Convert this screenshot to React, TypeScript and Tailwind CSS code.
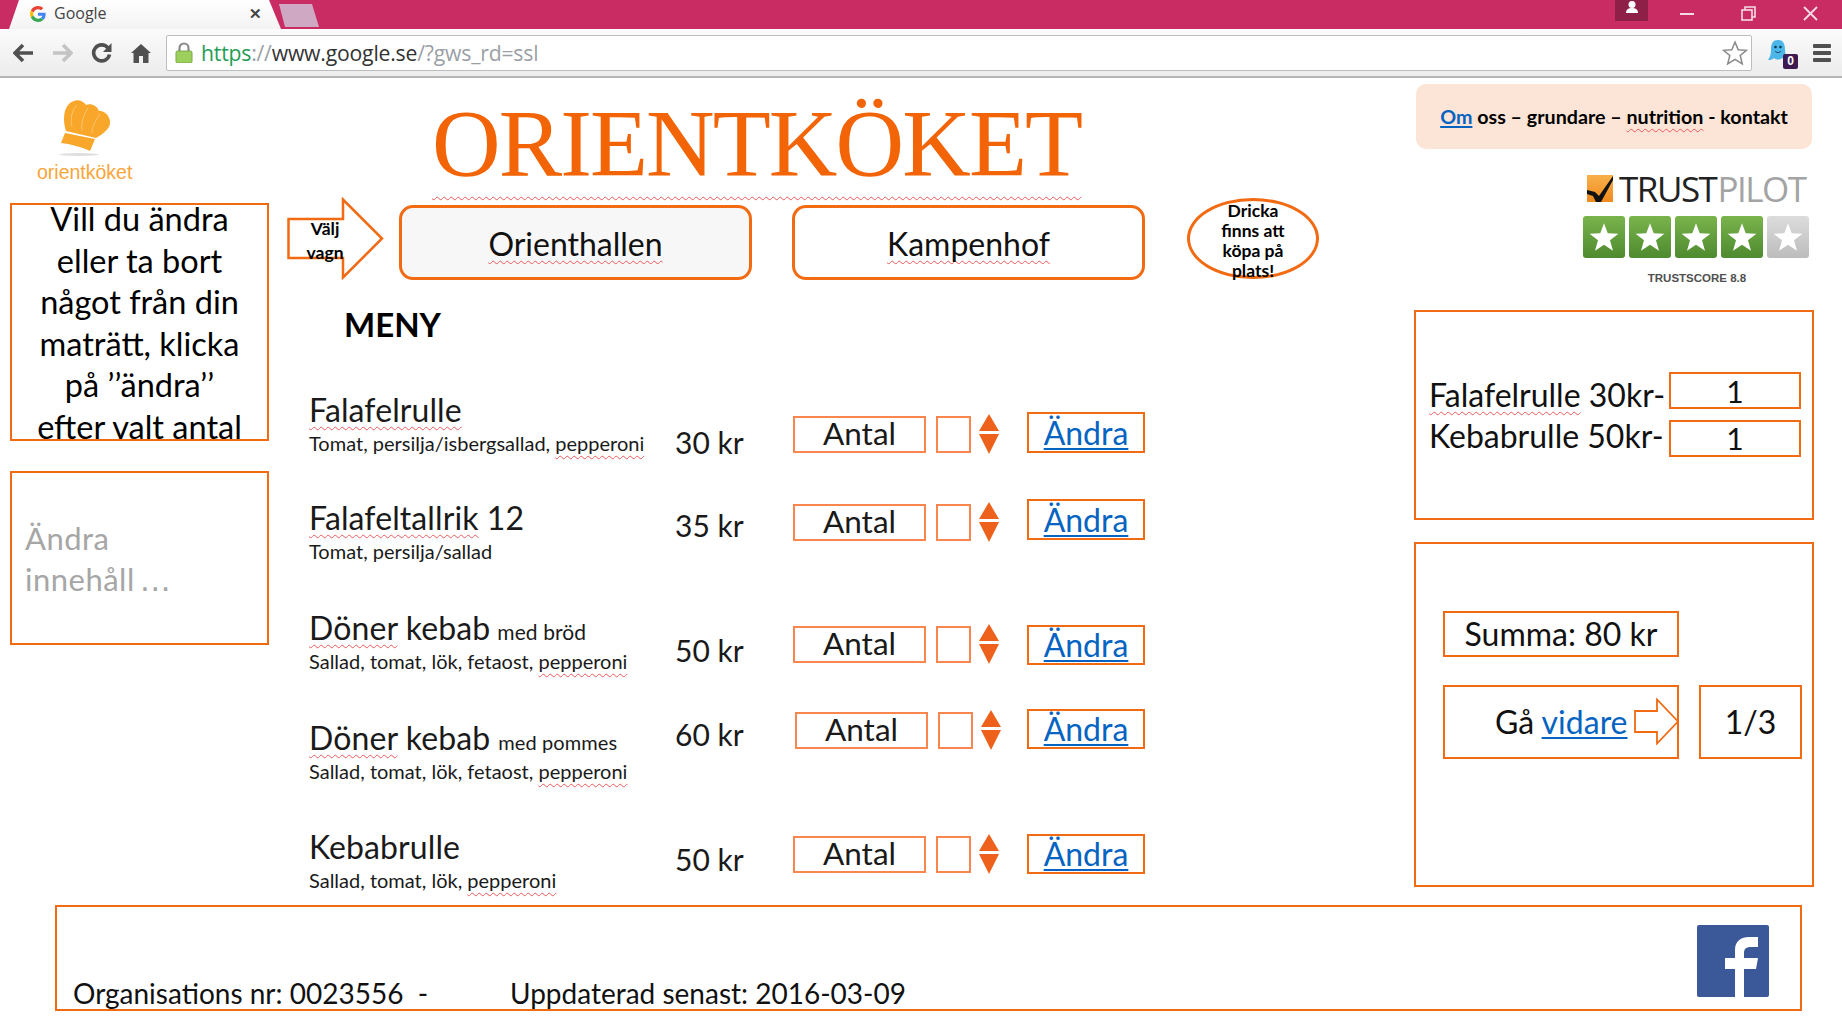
import React from "react";

const ORANGE = "border-[#f26a12]";
const SQ = "underline decoration-wavy decoration-[#ee5a5a] decoration-1 underline-offset-[4px] [text-decoration-skip-ink:none]";
const LINK = "text-[#0563c1] underline decoration-2 underline-offset-[3px]";

function Star({ size = 30, color = "#fff" }: { size?: number; color?: string }) {
  return (
    <svg width={size} height={size} viewBox="0 0 24 24">
      <polygon fill={color} points="12,1 15,9 23.5,9.3 16.8,14.6 19.2,23 12,18.2 4.8,23 7.2,14.6 0.5,9.3 9,9" />
    </svg>
  );
}

function Updown() {
  return (
    <svg width="20" height="40" viewBox="0 0 20 40">
      <polygon fill="#ee611c" points="10,0 20,17 0,17" />
      <polygon fill="#ee611c" points="0,20 20,20 10,40" />
    </svg>
  );
}

function Chrome() {
  return (
    <div className="h-[78px] flex flex-col">
      <div className="h-[29px] bg-[#c92c62] flex items-start shrink-0">
        <div className="ml-[9px] w-[272px] h-[29px] bg-linear-to-b from-white to-[#f3f3f3] [clip-path:polygon(10px_0,260px_0,272px_100%,0_100%)] flex items-center shrink-0">
          <svg className="ml-[21px] -mt-[2px]" width="16" height="16" viewBox="0 0 48 48">
            <path fill="#EA4335" d="M24 9.5c3.5 0 6.7 1.2 9.2 3.6l6.9-6.9C35.9 2.4 30.5 0 24 0 14.6 0 6.5 5.4 2.6 13.2l8 6.2C12.4 13.7 17.700 9.500 24 9.500z" />
            <path fill="#4285F4" d="M47 24.500c0-1.600-.100-3.100-.400-4.500H24v9h12.900c-.600 3-2.200 5.500-4.700 7.200l7.700 6C44.400 38 47 31.800 47 24.500z" />
            <path fill="#FBBC05" d="M10.500 28.600C10 27.200 9.800 25.600 9.800 24s.200-3.200.700-4.600l-8-6.200C.9 16.400 0 20.100 0 24s.900 7.600 2.600 10.800l7.900-6.200z" />
            <path fill="#34A853" d="M24 48c6.500 0 11.900-2.100 15.900-5.800l-7.700-6c-2.200 1.500-5 2.300-8.200 2.300-6.300 0-11.600-4.200-13.500-9.900l-7.900 6.200C6.500 42.600 14.600 48 24 48z" />
          </svg>
          <span className="ml-[8px] -mt-[3px] text-[16px] text-[#444] font-['Open_Sans',sans-serif]">Google</span>
          <span className="ml-[142px] -mt-[1px] text-[15px] font-bold text-[#444] font-['Liberation_Sans',sans-serif]">✕</span>
        </div>
        <div className="-ml-[2px] mt-[4px] w-[40px] h-[23px] bg-[#cfa9c3] [clip-path:polygon(0_0,33px_0,40px_100%,6px_100%)] shrink-0" />
        <div className="ml-auto flex items-start">
          <div className="w-[33px] h-[21px] bg-[#8e2048] flex justify-center">
            <svg width="18" height="15" viewBox="0 0 18 15">
              <circle cx="9" cy="4.500" r="3.500" fill="#fff" />
              <path fill="#fff" d="M3 13 C3 9 6 8 9 8 C12 8 15 9 15 13 Z" />
            </svg>
          </div>
          <svg className="ml-[32px] mt-[6px]" width="15" height="16" viewBox="0 0 15 16">
            <rect x="0" y="7" width="14" height="2" fill="#f6dbe4" />
          </svg>
          <svg className="ml-[46px] mt-[6px]" width="15" height="15" viewBox="0 0 15 15">
            <rect x="1" y="4" width="10" height="10" fill="none" stroke="#f6dbe4" strokeWidth="1.600" />
            <path d="M4 4 V1 H14 V11 H11" fill="none" stroke="#f6dbe4" strokeWidth="1.600" />
          </svg>
          <svg className="ml-[47px] mr-[24px] mt-[6px]" width="15" height="15" viewBox="0 0 15 15">
            <path d="M1 1 L14 14 M14 1 L1 14" stroke="#f6dbe4" strokeWidth="1.800" />
          </svg>
        </div>
      </div>
      <div className="h-[49px] bg-linear-to-b from-[#fbfbfb] to-[#ececec] border-b-2 border-[#b5b5b5] flex items-center shrink-0">
        <svg className="ml-[13px]" width="21" height="20" viewBox="0 0 21 20">
          <path d="M10 2 L2 10 L10 18 M2 10 H20" fill="none" stroke="#505050" strokeWidth="3.600" />
        </svg>
        <svg className="ml-[18px]" width="21" height="20" viewBox="0 0 21 20">
          <path d="M11 2 L19 10 L11 18 M19 10 H1" fill="none" stroke="#c4c4c4" strokeWidth="3.600" />
        </svg>
        <svg className="ml-[18px]" width="21" height="21" viewBox="0 0 21 21">
          <path d="M17 6 A8 8 0 1 0 18.500 12.500" fill="none" stroke="#505050" strokeWidth="3.600" />
          <polygon fill="#505050" points="20.500,1 20.500,10 12,10" />
        </svg>
        <svg className="ml-[19px]" width="20" height="20" viewBox="0 0 20 20">
          <path fill="#505050" d="M10 1 L20 10 H17.500 V20 H12 V13 H8 V20 H2.500 V10 H0 Z" />
        </svg>
        <div className="ml-[15px] w-[1586px] h-[36px] bg-white border border-[#bdbdbd] rounded-[2px] flex items-center shrink-0">
          <svg className="ml-[8px]" width="18" height="21" viewBox="0 0 18 21">
            <path d="M4.500 9 V6 A4.500 4.500 0 0 1 13.500 6 V9" fill="none" stroke="#8a8a8a" strokeWidth="2.200" />
            <rect x="1" y="9" width="16" height="12" rx="1.500" fill="#9ccf5c" stroke="#7aa848" />
          </svg>
          <span className="ml-[8px] text-[21.200px] tracking-[-0.2px] font-['Open_Sans',sans-serif]">
            <span className="text-[#1f9d55]">https</span>
            <span className="text-[#9aa0a6]">://</span>
            <span className="text-[#333]">www.google.se</span>
            <span className="text-[#9aa0a6]">/?gws_rd=ssl</span>
          </span>
          <svg className="ml-auto mr-[3px]" width="26" height="26" viewBox="0 0 24 24">
            <polygon fill="#fff" stroke="#8a8a8a" strokeWidth="1.400" points="12,2 15,9 22.500,9.500 16.800,14.300 18.700,22 12,17.800 5.300,22 7.200,14.300 1.500,9.500 9,9" />
          </svg>
        </div>
        <div className="relative ml-[15px] mt-[2px] w-[30px] h-[30px] shrink-0">
          <svg width="22" height="24" viewBox="0 0 22 24">
            <path fill="#4db6e8" d="M11 1 C17 1 18 6 18 11 C18 15 20 19 21 21 C18 21 16 20 15 19 C13 21 9 21 7 19 C5 21 3 21 1 21 C3 18 4 15 4 11 C4 6 5 1 11 1 Z" />
            <circle cx="8.500" cy="8" r="1.300" fill="#0f3d57" />
            <circle cx="13.500" cy="8" r="1.300" fill="#0f3d57" />
            <path d="M8 12 C9.500 14 12.500 14 14 12" fill="none" stroke="#0f3d57" strokeWidth="1" />
          </svg>
          <span className="absolute left-[16px] top-[15px] w-[15px] h-[15px] bg-[#3e1a50] rounded-[2px] text-white text-[12px] leading-[15px] text-center font-bold font-['Liberation_Sans',sans-serif]">0</span>
        </div>
        <div className="ml-[16px] w-[18px] flex flex-col gap-[3px] shrink-0">
          <div className="h-[4px] bg-[#505050] rounded-[1px]" />
          <div className="h-[4px] bg-[#505050] rounded-[1px]" />
          <div className="h-[4px] bg-[#505050] rounded-[1px]" />
        </div>
      </div>
    </div>
  );
}

function Logo() {
  return (
    <div className="h-[125px] flex flex-col">
      <svg className="ml-[48px] mt-[21px]" width="56" height="58" viewBox="58 99 56 58">
        <path fill="#f9a72b" d="M66 131 C62 118 64 104 74 101 C79 99 84 102 86 105 C90 103 97 105 99 111 C104 110 111 116 110 124 C109 130 100 136 96 138 Z" />
        <path fill="#f9a72b" d="M65 133 L95 139 L90 151 C82 147 70 144 61 143 Z" />
        <path d="M77 105 C72 110 70 118 72 127 M88 108 C84 114 81 122 82 130 M100 114 C96 120 92 126 92 133" fill="none" stroke="#fbc56f" strokeWidth="1" />
        <ellipse cx="79" cy="154.500" rx="20" ry="1.500" fill="#dedede" />
      </svg>
      <span className="ml-[27px] mt-[3px] text-[19.500px] leading-[24px] text-[#f9a53a] font-['Liberation_Sans',sans-serif]">orientköket</span>
    </div>
  );
}

function LeftColumn() {
  return (
    <div className="ml-[10px] w-[259px] flex flex-col shrink-0">
      <Logo />
      <div className={`h-[238px] border-2 ${ORANGE} text-center text-[32.500px] leading-[41.500px] text-black overflow-visible`}>
        <p className="-mt-[7px]">Vill du ändra</p>
        <p>eller ta bort</p>
        <p>något från din</p>
        <p>maträtt, klicka</p>
        <p>på ’’ändra’’</p>
        <p className="whitespace-nowrap">efter valt antal</p>
      </div>
      <div className={`mt-[30px] h-[174px] border-2 ${ORANGE} pl-[13px] pt-[45px] text-[31px] leading-[41px] text-[#a6a6a6] tracking-[0.5px]`}>
        <p>Ändra</p>
        <p>innehåll<span className="ml-[5px] font-['DejaVu_Sans',sans-serif] tracking-[0px]">…</span></p>
      </div>
    </div>
  );
}

type Row = {
  name: string;
  sq: boolean;
  extra?: string;
  suffix?: string;
  suffixClass?: string;
  sub: string;
  pep: boolean;
  price: string;
  rowH: string;
  priceMt: string;
  antalMt: string;
  andraMt: string;
  andraH: string;
  shift?: boolean;
};

const rows: Row[] = [
  { name: "Falafelrulle", sq: true, sub: "Tomat, persilja/isbergsallad, ", pep: true, price: "30 kr", rowH: "h-[108px]", priceMt: "mt-[33px]", antalMt: "mt-[25px]", andraMt: "mt-[21px]", andraH: "h-[41px]" },
  { name: "Falafeltallrik", sq: true, extra: " 12", sub: "Tomat, persilja/sallad", pep: false, price: "35 kr", rowH: "h-[110px]", priceMt: "mt-[8px]", antalMt: "mt-[5px]", andraMt: "mt-[0px]", andraH: "h-[41px]" },
  { name: "Döner", sq: true, extra: " kebab", suffix: "med bröd", suffixClass: "ml-[7px] text-[21px]", sub: "Sallad, tomat, lök, fetaost, ", pep: true, price: "50 kr", rowH: "h-[110px]", priceMt: "mt-[23px]", antalMt: "mt-[17px]", andraMt: "mt-[16px]", andraH: "h-[40px]" },
  { name: "Döner", sq: true, extra: " kebab", suffix: "med pommes", suffixClass: "ml-[8px] text-[20px]", sub: "Sallad, tomat, lök, fetaost, ", pep: true, price: "60 kr", rowH: "h-[109px]", priceMt: "-mt-[3px]", antalMt: "-mt-[7px]", andraMt: "-mt-[10px]", andraH: "h-[40px]", shift: true },
  { name: "Kebabrulle", sq: false, sub: "Sallad, tomat, lök, ", pep: true, price: "50 kr", rowH: "h-[66px]", priceMt: "mt-[13px]", antalMt: "mt-[8px]", andraMt: "mt-[6px]", andraH: "h-[40px]" },
];

function MenuRow({ row }: { row: Row }) {
  return (
    <div className={`${row.rowH} pl-[22px] flex items-start`}>
      <div className="w-[366px] shrink-0">
        <div className="mt-[1px] h-[36px] leading-[36px] text-[32px] tracking-[0.1px] text-[#1a1a1a] whitespace-nowrap">
          {row.sq ? <span className={SQ}>{row.name}</span> : row.name}
          {row.extra}
          {row.suffix && <span className={row.suffixClass}>{row.suffix}</span>}
        </div>
        <div className="h-[28px] leading-[30px] text-[20px] text-[#1a1a1a] whitespace-nowrap">
          {row.sub}
          {row.pep && <span className={SQ}>pepperoni</span>}
        </div>
      </div>
      <div className={`${row.priceMt} ${row.shift ? "w-[120px]" : "w-[118px]"} shrink-0 h-[36px] leading-[36px] text-[30px] text-[#1a1a1a]`}>{row.price}</div>
      <div className={`${row.antalMt} w-[133px] h-[37px] border-2 border-[#f9854f] flex items-center justify-center pb-[2px] text-[31.500px] text-[#1a1a1a] shrink-0`}>Antal</div>
      <div className={`${row.antalMt} ml-[10px] w-[35px] h-[37px] border-2 border-[#f9854f] shrink-0`} />
      <div className={`${row.antalMt} ml-[8px] -translate-y-[2px] w-[20px] shrink-0`}><Updown /></div>
      <div className={`${row.andraMt} ${row.shift ? "ml-[26px]" : "ml-[28px]"} w-[118px] ${row.andraH} border-[2px] ${ORANGE} flex items-center justify-center text-[32px] shrink-0`}>
        <span className={LINK}>Ändra</span>
      </div>
    </div>
  );
}

function CenterColumn() {
  return (
    <div className="ml-[18px] w-[1032px] flex flex-col shrink-0">
      <div className="h-[119px] pl-[145px] pt-[6px]">
        <h1 className="text-[95px] tracking-[-1.900px] leading-[120px] font-normal text-[#f26405] whitespace-nowrap font-['Liberation_Serif',serif] underline decoration-wavy decoration-[#ee5a5a] decoration-1 underline-offset-[20px] [text-decoration-skip-ink:none]">ORIENTKÖKET</h1>
      </div>
      <div className="h-[83px] flex items-start">
        <div className="relative w-[97px] h-[83px] shrink-0">
          <svg width="97" height="83" viewBox="0 0 97 83">
            <polygon fill="#fff" stroke="#f26a12" strokeWidth="2.500" points="1.500,22 56,22 56,2.500 95,41.500 56,80.500 56,61 1.500,61" />
          </svg>
          <div className="absolute left-[0px] top-[20px] w-[76px] text-center text-[17.500px] leading-[24px] font-bold text-black">
            <p>Välj</p>
            <p>vagn</p>
          </div>
        </div>
        <div className={`ml-[15px] mt-[8px] w-[353px] h-[75px] bg-[#f7f7f7] border-[3px] ${ORANGE} rounded-[14px] flex items-center justify-center pt-[2px] text-[32px] text-[#111] shrink-0`}>
          <span className={SQ}>Orienthallen</span>
        </div>
        <div className={`ml-[40px] mt-[8px] w-[353px] h-[75px] bg-white border-[3px] ${ORANGE} rounded-[14px] flex items-center justify-center pt-[2px] text-[32px] text-[#111] shrink-0`}>
          <span className={SQ}>Kampenhof</span>
        </div>
        <div className={`ml-[42px] mt-[1px] w-[132px] h-[81px] rounded-[50%] border-[3px] ${ORANGE} flex flex-col items-center text-[17.500px] leading-[20px] font-bold text-black shrink-0`}>
          <p>Dricka</p>
          <p>finns att</p>
          <p>köpa på</p>
          <p>plats!</p>
        </div>
      </div>
      <div className="h-[111px] pl-[57px] pt-[22px] text-[33px] leading-[44px] font-bold text-black">MENY</div>
      <div className="flex flex-col">
        {rows.map((r, i) => (
          <MenuRow key={i} row={r} />
        ))}
      </div>
    </div>
  );
}

function Trustpilot() {
  return (
    <div className="h-[161px] flex flex-col pl-[169px]">
      <div className="mt-[26px] h-[27px] flex items-center ml-[4px]">
        <svg width="26" height="27" viewBox="0 0 26 27">
          <defs>
            <linearGradient id="tp" x1="0" y1="0" x2="0" y2="1">
              <stop offset="0" stopColor="#f8b04a" />
              <stop offset="1" stopColor="#ee8a1e" />
            </linearGradient>
          </defs>
          <rect width="26" height="27" fill="url(#tp)" />
          <path d="M0 15 L8 17 L12 21 L26 1 L26 5 L14 27 L9 27 L6 21 L0 19 Z" fill="#111" />
        </svg>
        <span className="ml-[6px] text-[35px] leading-[27px] tracking-[-1.500px] font-['Open_Sans',sans-serif] text-[#222]">TRUST</span>
        <span className="ml-[1px] text-[35px] leading-[27px] tracking-[-1.500px] font-['Open_Sans',sans-serif] text-[#a3a3a3]">PILOT</span>
      </div>
      <div className="mt-[14px] flex gap-[4px]">
        {[0, 1, 2, 3].map((k) => (
          <div key={k} className="w-[42px] h-[42px] rounded-[3px] bg-linear-to-b from-[#7ab44c] to-[#4e8a2f] flex items-center justify-center">
            <Star />
          </div>
        ))}
        <div className="w-[42px] h-[42px] rounded-[3px] bg-linear-to-b from-[#dcdcdc] to-[#bcbcbc] flex items-center justify-center">
          <Star />
        </div>
      </div>
      <div className="mt-[12px] w-[228px] text-center text-[11.500px] leading-[16px] font-bold text-[#4f4f4f] font-['Liberation_Sans',sans-serif]">TRUSTSCORE 8.8</div>
    </div>
  );
}

function RightColumn() {
  return (
    <div className="ml-[95px] w-[400px] flex flex-col shrink-0">
      <div className="mt-[6px] ml-[2px] w-[396px] h-[65px] bg-[#fce4d6] rounded-[10px] flex items-center justify-center pt-[1px] text-[19.700px] font-bold text-black whitespace-nowrap">
        <p>
          <span className="text-[#0563c1] underline decoration-2 underline-offset-[2px]">Om</span> oss – grundare – <span className={SQ}>nutrition</span> - kontakt
        </p>
      </div>
      <Trustpilot />
      <div className={`h-[210px] border-[2px] ${ORANGE} pl-[13px] pr-[10px] pt-[62px] text-[32px] text-[#111]`}>
        <div className="flex items-start h-[46px]">
          <span className="w-[240px] leading-[46px] -mt-[2px] whitespace-nowrap"><span className={SQ}>Falafelrulle</span> 30kr-</span>
          <span className={`w-[132px] h-[37px] -mt-[2px] border-2 ${ORANGE} flex items-center justify-center pt-[2px] text-[30px] shrink-0`}>1</span>
        </div>
        <div className="flex items-start h-[46px]">
          <span className="w-[240px] leading-[46px] -mt-[7px] whitespace-nowrap">Kebabrulle 50kr-</span>
          <span className={`w-[132px] h-[37px] border-2 ${ORANGE} flex items-center justify-center text-[30px] shrink-0`}>1</span>
        </div>
      </div>
      <div className={`mt-[22px] h-[345px] border-[2px] ${ORANGE} pl-[27px] pt-[67px] text-[32px] text-[#111]`}>
        <div className={`w-[236px] h-[46px] border-2 ${ORANGE} flex items-center justify-center`}>Summa: 80 kr</div>
        <div className="mt-[28px] flex">
          <div className={`relative w-[236px] h-[74px] border-2 ${ORANGE} flex items-center pl-[50px] shrink-0`}>
            <span>Gå <span className={LINK}>vidare</span></span>
            <svg className="absolute -right-[2px] top-[11px]" width="45" height="47" viewBox="0 0 45 47">
              <polygon fill="#fff" stroke="#f26a12" strokeWidth="1.800" points="1,13 23,13 23,1.500 44,23.500 23,45.500 23,34 1,34" />
            </svg>
          </div>
          <div className={`ml-[20px] w-[103px] h-[74px] border-2 ${ORANGE} flex items-center justify-center shrink-0`}>1/3</div>
        </div>
      </div>
    </div>
  );
}

function Footer() {
  return (
    <div className={`mt-[1px] ml-[55px] w-[1747px] h-[106px] border-[2px] ${ORANGE} flex items-start text-[28px] text-[#111]`}>
      <span className="ml-[16px] mt-[68px] leading-[36px] w-[437px] whitespace-pre shrink-0">Organisations nr: 0023556  -</span>
      <span className="mt-[68px] leading-[36px] whitespace-nowrap">Uppdaterad senast: 2016-03-09</span>
      <div className="ml-auto mr-[31px] mt-[18px] w-[72px] h-[72px] bg-[#3b5998] rounded-[2px] shrink-0">
        <svg width="72" height="72" viewBox="0 0 72 72">
          <path fill="#fff" d="M38 72 V44 H28 V33 H38 V25 C38 16 44 12 52 12 H61 V22 H54 C49 22 47 24 47 28 V33 H61 L59 44 H47 V72 Z" />
        </svg>
      </div>
    </div>
  );
}

export default function App() {
  return (
    <div className="w-[1842px] h-[1026px] bg-white overflow-hidden font-['Lato','Noto_Sans',sans-serif]">
      <Chrome />
      <div className="h-[826px] flex items-start">
        <LeftColumn />
        <CenterColumn />
        <RightColumn />
      </div>
      <Footer />
    </div>
  );
}
